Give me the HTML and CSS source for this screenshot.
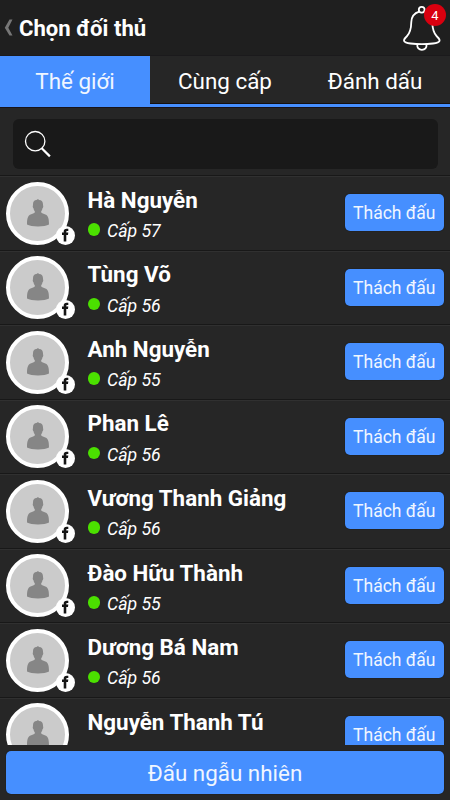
FILE: index.html
```html
<!DOCTYPE html>
<html lang="vi">
<head>
<meta charset="utf-8">
<title>Chọn đối thủ</title>
<link rel="stylesheet" href="styles.css">
</head>
<body>
<svg class="defs" aria-hidden="true">
  <symbol id="person" viewBox="0 0 22 28"><path d="M11 0 L12 1 C15 1 16.200 3 16 6.300 C16.500 7 16.200 9 15.400 9.400 C15.200 10.800 14.700 11.600 14.200 12.200 V13.600 C15.500 14.600 17.500 15 19 15.800 C21.200 17 22 20 22 25.600 C18 28.200 4 28.200 0 25.600 C0 20 .8 17 3 15.800 C4.500 15 6.500 14.600 7.800 13.600 V12.200 C7.300 11.600 6.800 10.800 6.600 9.400 C5.800 9 5.500 7 6 6.300 C5.800 3 7 1.200 9.500 1.100 Z"/></symbol>
  <symbol id="fb" viewBox="0 0 19 19"><path d="M7.700 15.500V9H6V6.600h1.700V5.600C7.700 3.600 8.800 2.800 10.600 2.800h1.700v2.300h-1c-.8 0-1 .3-1 .9v.6h2L12 9h-1.700v6.500Z"/></symbol>
</svg>
<header class="header">
  <svg class="back" viewBox="0 0 10 18"><path d="M5.500.5H8.500L4.300 8.800 8.500 16.500H5.500L.8 8.800Z"/></svg>
  <h1 class="title">Chọn đối thủ</h1>
  <div class="alerts">
    <svg class="bell" viewBox="0 0 40 46"><circle cx="19.700" cy="4.800" r="2.900"/><path d="M17.200 6.600C12.500 8 9.500 11.500 9.300 17c-.1 6-.5 10.500-4.600 14.500-2 2-3.200 2.800-2.600 4.500.5 1.600 3 2.100 6.500 2.500 7.500.8 15 .8 22.400 0 3.500-.4 6-.9 6.500-2.500.6-1.700-.6-2.500-2.600-4.500-4-4-4.500-8.500-4.600-14.500-.2-5.500-3.200-9-7.900-10.400"/><path d="M15.300 39.300c-.4 3.400 1.600 5.500 4.600 5.500s5-2.100 4.600-5.500"/></svg>
    <span class="badge">4</span>
  </div>
</header>
<nav class="tabs">
  <a class="tab active">Thế giới</a>
  <a class="tab">Cùng cấp</a>
  <a class="tab">Đánh dấu</a>
</nav>
<div class="search-area">
  <div class="search"><svg viewBox="0 0 28 28"><circle cx="11.200" cy="11.200" r="9.700"/><path d="m17.700 18.200 8.200 8.200"/></svg></div>
</div>
<main class="list" id="list"></main>
<footer class="footer"><button class="random">Đấu ngẫu nhiên</button></footer>
<script src="app.js"></script>
</body>
</html>
```

FILE: styles.css
```css
* { box-sizing: border-box; }
body {
  margin: 0;
  width: 450px;
  height: 800px;
  overflow: hidden;
  display: flex;
  flex-direction: column;
  background: #262626;
  color: #fff;
  font-family: Roboto, "Liberation Sans", sans-serif;
}
.defs { position: absolute; width: 0; height: 0; }
.header {
  flex: none;
  height: 56px;
  display: flex;
  align-items: center;
  padding: 1px 8px 0 4px;
  background: #1f1f1f;
  border-bottom: 1px solid #1b1a1c;
}
.back { width: 10px; height: 18px; fill: #777; }
.title { margin: 0 0 0 5px; flex: 1; font-size: 22.100px; line-height: 30px; font-weight: 700; white-space: nowrap; }
.alerts { position: relative; width: 40px; height: 46px; }
.bell { width: 40px; height: 46px; fill: none; stroke: #fff; stroke-width: 1.8; display: block; }
.badge {
  position: absolute;
  left: 22px;
  top: -1.500px;
  width: 22px;
  height: 22px;
  border-radius: 50%;
  background: #d9000f;
  font-size: 13px;
  line-height: 23px;
  text-align: center;
}
.tabs { flex: none; display: flex; height: 52px; border-bottom: 1px solid #17131a; }
.tab {
  flex: 1;
  border-bottom: 3px solid #468fff;
  box-shadow: inset 0 -1px #151010;
  font-size: 22.400px;
  line-height: 50px;
  text-align: center;
}
.active { background: #468fff; box-shadow: none; color: #f0f6ff; }
.search-area { flex: none; height: 67px; padding: 11px 12.500px 0 12.500px; }
.search { height: 50px; padding: 11px; border-radius: 6px; background: #191919; }
.search svg { width: 28px; height: 28px; display: block; fill: none; stroke: #fff; stroke-width: 1.300; }
.search path { stroke-width: 2.200; }
.list { flex: 1; min-height: 0; overflow: hidden; }
.row {
  height: 74.570px;
  display: flex;
  align-items: flex-start;
  padding: 5.500px 6px 0;
  border-top: 1px solid #181818;
  box-shadow: inset 0 1px #303030;
}
.avatar {
  position: relative;
  width: 63px;
  height: 63px;
  border-radius: 50%;
  border: 4px solid #fff;
  background: #cbcbcb;
}
.person { position: absolute; left: 16.500px; top: 13px; width: 22px; height: 28px; fill: #868686; }
.fb { position: absolute; left: 46px; top: 40px; width: 19px; height: 19px; border-radius: 50%; background: #fff; fill: #151515; }
.info { flex: 1; padding: 0 0 0 18.500px; }
.name { margin-top: 4.300px; font-size: 22.400px; line-height: 28px; font-weight: 700; white-space: nowrap; }
.level { display: flex; align-items: center; gap: 7px; margin-top: 5.200px; font-size: 17.700px; line-height: 24px; font-style: italic; }
.level::before { content: ""; width: 12.500px; height: 12.500px; border-radius: 50%; background: #4be000; margin-top: -3px; }
.challenge, .random {
  border: 0;
  background: #468fff;
  color: #f0f6ff;
  font-family: inherit;
  padding: 0;
  white-space: nowrap;
}
.challenge { width: 99.500px; height: 37px; margin-top: 12.500px; border-radius: 5px; font-size: 17.500px; line-height: 39px; box-shadow: 0 0 1px #000; }
.row:last-child .level { visibility: hidden; }
.footer { flex: none; height: 55px; padding: 5.500px 6px 6px; }
.random { display: block; width: 438px; height: 43.500px; border-radius: 5px; font-size: 22.400px; line-height: 44px; box-shadow: 0 0 1px #000; }
```

FILE: app.js
```js
const players = [
  ["Hà Nguyễn", 57], ["Tùng Võ", 56], ["Anh Nguyễn", 55], ["Phan Lê", 56],
  ["Vương Thanh Giảng", 56], ["Đào Hữu Thành", 55], ["Dương Bá Nam", 56], ["Nguyễn Thanh Tú", 55]
];
document.getElementById("list").innerHTML = players.map(([name, level]) => `
  <article class="row">
    <div class="avatar">
      <svg class="person"><use href="#person"/></svg>
      <svg class="fb"><use href="#fb"/></svg>
    </div>
    <div class="info"><div class="name">${name}</div><div class="level">Cấp ${level}</div></div>
    <button class="challenge">Thách đấu</button>
  </article>`).join("");
```
